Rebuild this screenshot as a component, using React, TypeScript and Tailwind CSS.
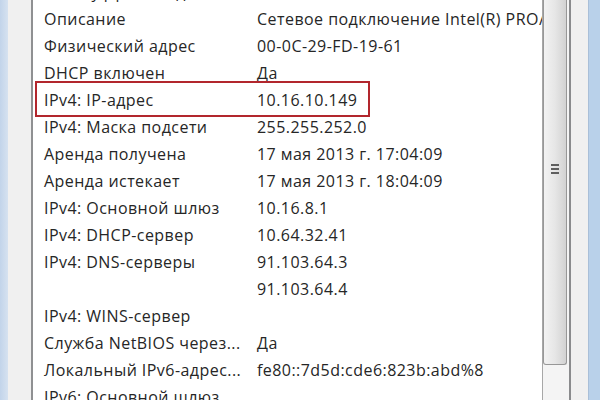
const rows: { label: string; value: string; mark?: boolean }[] = [
  { label: 'DNS-суффикс подключ...', value: '' },
  { label: 'Описание', value: 'Сетевое подключение Intel(R) PRO/1000 MT' },
  { label: 'Физический адрес', value: '00-0C-29-FD-19-61' },
  { label: 'DHCP включен', value: 'Да' },
  { label: 'IPv4: IP-адрес', value: '10.16.10.149', mark: true },
  { label: 'IPv4: Маска подсети', value: '255.255.252.0' },
  { label: 'Аренда получена', value: '17 мая 2013 г. 17:04:09' },
  { label: 'Аренда истекает', value: '17 мая 2013 г. 18:04:09' },
  { label: 'IPv4: Основной шлюз', value: '10.16.8.1' },
  { label: 'IPv4: DHCP-сервер', value: '10.64.32.41' },
  { label: 'IPv4: DNS-серверы', value: '91.103.64.3' },
  { label: '', value: '91.103.64.4' },
  { label: 'IPv4: WINS-сервер', value: '' },
  { label: 'Служба NetBIOS через...', value: 'Да' },
  { label: 'Локальный IPv6-адрес...', value: 'fe80::7d5d:cde6:823b:abd%8' },
  { label: 'IPv6: Основной шлюз', value: '' },
];

export default function App() {
  return (
    <div
      className="flex h-[400px] w-[600px] overflow-hidden bg-[#f0f0f0]"
      style={{ fontFamily: '"Open Sans", "Liberation Sans", Arial, sans-serif' }}
    >
      {/* window frame left */}
      <div className="w-[8px] shrink-0 bg-gradient-to-r from-[#c2d4ea] to-[#d6e2f0]" />
      <div className="w-[23px] shrink-0 bg-[#f0f0f0]" />

      {/* list view */}
      <div className="flex min-w-0 flex-1 border-x-2 border-l-[#8f9092] border-r-[#8a8b8d] bg-white">
        <div className="min-w-0 flex-1 overflow-hidden">
          <div className="-mt-[22px]">
            {rows.map((row, i) => (
              <div
                key={i}
                className="relative flex h-[27px] items-center text-[16px] tracking-[0.45px] text-[#262626]"
              >
                <div className="w-[224px] shrink-0 overflow-hidden whitespace-nowrap pl-[11px]">{row.label}</div>
                <div className="whitespace-nowrap">{row.value}</div>
                {row.mark && (
                  <div className="absolute -top-[5px] -bottom-[4px] left-[2px] w-[335px] border-2 border-[#b2262d]" />
                )}
              </div>
            ))}
          </div>
        </div>

        {/* scrollbar */}
        <div className="flex w-[27px] shrink-0 flex-col border-l border-[#a7a7a7] bg-[#f4f4f4] pr-[2px]">
          <div className="flex h-[365px] items-end justify-center rounded-b-[3px] border-x border-b border-[#979797] bg-gradient-to-r from-[#f2f2f2] via-[#e6e6e6] to-[#d2d2d2] pb-[190px]">
            <div className="flex flex-col gap-[2px]">
              <div className="h-[2px] w-[8px] bg-[#5f5f5f]" />
              <div className="h-[2px] w-[8px] bg-[#5f5f5f]" />
              <div className="h-[2px] w-[8px] bg-[#5f5f5f]" />
            </div>
          </div>
          <div className="flex-1" />
        </div>
      </div>

      {/* window frame right */}
      <div className="w-[17px] shrink-0 bg-[#f0f0f0]" />
      <div className="w-[12px] shrink-0 border-l border-[#a9bfd8] bg-[#b9d1ea]" />
    </div>
  );
}
